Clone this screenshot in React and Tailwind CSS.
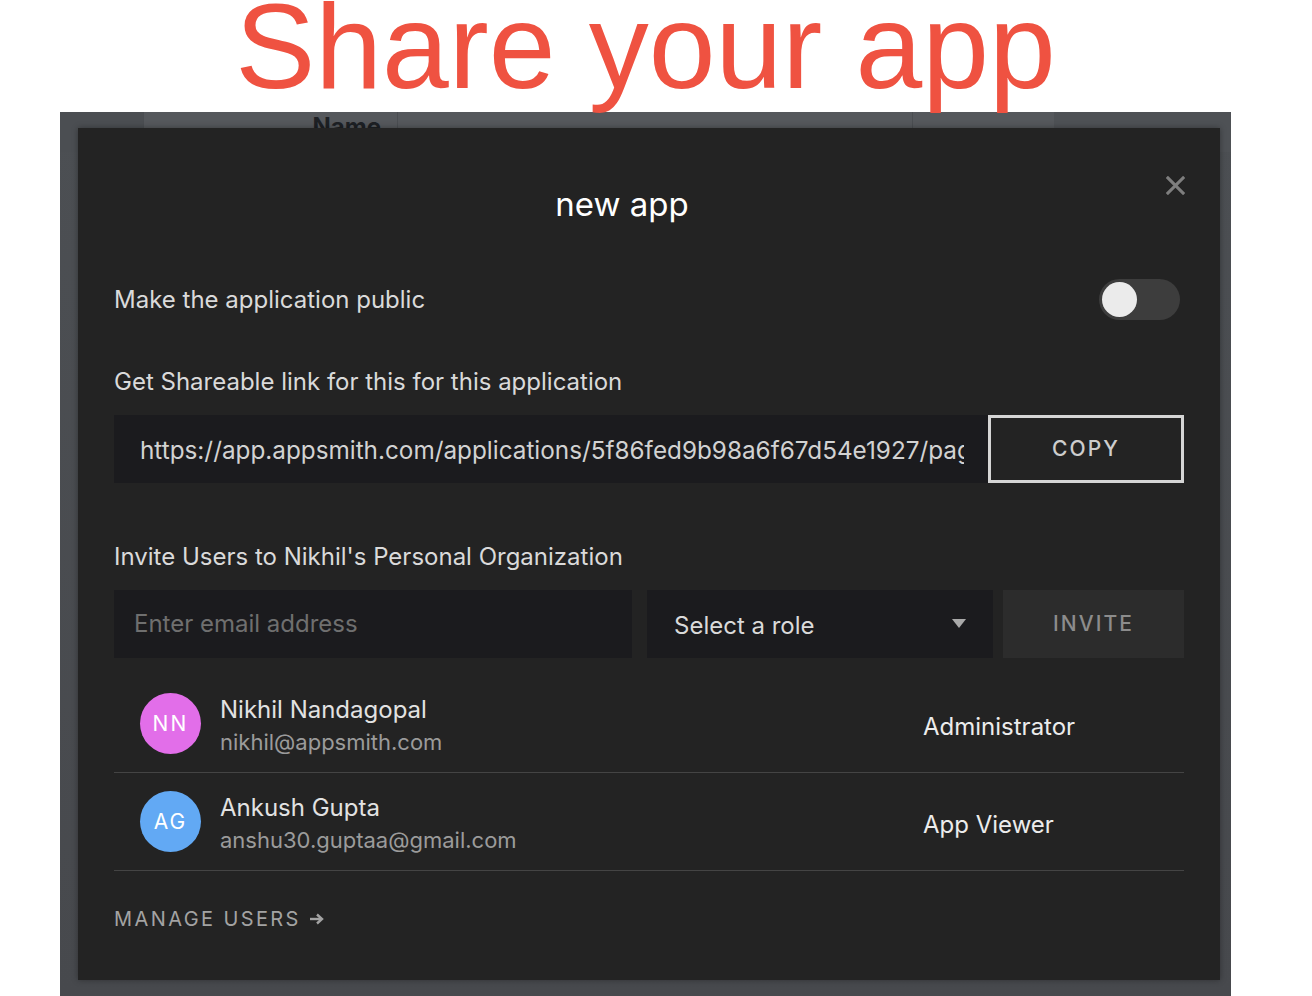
import React, { useState } from 'react';

const users = [
  { initials: 'NN', name: 'Nikhil Nandagopal', email: 'nikhil@appsmith.com', role: 'Administrator', color: 'bg-[#e26ee9]' },
  { initials: 'AG', name: 'Ankush Gupta', email: 'anshu30.guptaa@gmail.com', role: 'App Viewer', color: 'bg-[#62a9f4]' },
];

const shareLink = 'https://app.appsmith.com/applications/5f86fed9b98a6f67d54e1927/pages/5f86fed9b98a6f67d54e1929';

const CloseIcon = () => (
  <svg width="19" height="19" viewBox="0 0 20 20" fill="none">
    <path d="M2 2L18 18M18 2L2 18" stroke="#7e7e7e" strokeWidth="3.2" strokeLinecap="square" />
  </svg>
);

const Caret = () => (
  <svg width="14" height="10" viewBox="0 0 14 10">
    <path d="M0 0H14L7 9Z" fill="#a9a9a9" />
  </svg>
);

const ArrowRight = () => (
  <svg width="15" height="12" viewBox="0 0 15 12" fill="none">
    <path d="M1 6H12" stroke="#a3a3a3" strokeWidth="2.4" />
    <path d="M8 1.5L13 6L8 10.5" stroke="#a3a3a3" strokeWidth="2.4" fill="none" />
  </svg>
);

const ShareModal = () => {
  const [isPublic, setIsPublic] = useState(false);

  return (
    <div className="absolute left-[18px] top-[16px] w-[1142px] h-[852px] bg-[#232323] shadow-[0_0_6px_rgba(0,0,0,0.35)] px-[36px] flex flex-col font-['Inter',sans-serif]">
      <button className="absolute top-[48px] right-[35px]">
        <CloseIcon />
      </button>

      <h2 className="pt-[56px] pr-[54px] text-center text-[33px] leading-[40px] text-white font-normal">new app</h2>

      <div className="mt-[55px] h-[41px] flex items-center justify-between">
        <span className="text-[24px] leading-[28px] text-[#dadada]">Make the application public</span>
        <button
          onClick={() => setIsPublic(!isPublic)}
          className="w-[81px] h-[41px] rounded-full bg-[#3d3d3d] flex items-center px-[3px] mr-[4px]"
        >
          <span className="w-[35px] h-[35px] rounded-full bg-[#ebebeb]" />
        </button>
      </div>

      <p className="mt-[48px] text-[24px] leading-[28px] text-[#dadada]">Get Shareable link for this for this application</p>

      <div className="mt-[19px] flex h-[68px]">
        <div className="w-[874px] bg-[#1b1b1e] flex items-center pl-[26px] pr-[24px] pt-[3px]">
          <span className="block min-w-0 flex-1 text-[24.3px] text-[#d2d2d2] whitespace-nowrap overflow-hidden">{shareLink}</span>
        </div>
        <button className="w-[196px] h-[68px] border-[3px] border-[#d5d5d5] text-[21px] tracking-[0.1em] text-[#cdcdcd] font-medium">
          COPY
        </button>
      </div>

      <p className="mt-[60px] text-[24px] leading-[28px] text-[#dadada]">Invite Users to Nikhil's Personal Organization</p>

      <div className="mt-[19px] flex h-[68px]">
        <div className="w-[518px] bg-[#1b1b1e] flex items-center pl-[20px]">
          <span className="text-[24px] text-[#6f6f6f]">Enter email address</span>
        </div>
        <div className="ml-[15px] w-[346px] bg-[#1b1b1e] flex items-center justify-between pl-[27px] pr-[27px]">
          <span className="mt-[3px] text-[24px] text-[#dadada]">Select a role</span>
          <Caret />
        </div>
        <button className="ml-[10px] flex-1 bg-[#2c2c2c] text-[21px] tracking-[0.1em] text-[#8c8c8c] font-medium">
          INVITE
        </button>
      </div>

      <div className="mt-[17px]">
        {users.map((user) => (
          <div key={user.email} className="h-[98px] border-b border-[#444444] flex items-center pl-[26px]">
            <div className={`w-[61px] h-[61px] rounded-full ${user.color} flex items-center justify-center text-white text-[21px] tracking-[0.1em]`}>
              {user.initials}
            </div>
            <div className="ml-[19px] mt-[4px] w-[703px] flex flex-col">
              <span className="text-[24px] leading-[33px] text-[#e2e2e2]">{user.name}</span>
              <span className="text-[22px] leading-[33px] text-[#9b9b9b]">{user.email}</span>
            </div>
            <span className="mt-[6px] text-[24px] text-[#ececec]">{user.role}</span>
          </div>
        ))}
      </div>

      <a href="#" className="mt-[36px] flex items-center gap-[8px] text-[20px] leading-[24px] tracking-[0.12em] text-[#a3a3a3]">
        MANAGE USERS
        <ArrowRight />
      </a>
    </div>
  );
};

const App = () => {
  return (
    <div className="w-[1312px] h-[996px] bg-white overflow-hidden">
      <div className="ml-[60px] w-[1171px]">
        <div className="relative z-10 h-[112px] flex justify-center">
          <h1 className="-mt-[14px] h-[120px] text-center text-[120px] leading-[120px] text-[#ef5241] font-['Liberation_Sans',Arial,sans-serif] whitespace-nowrap">
            Share your app
          </h1>
        </div>

        <div className="relative h-[884px] bg-[linear-gradient(180deg,#4c4f53,#47494d)]">
          <div className="flex h-[40px] font-['Inter',sans-serif]">
            <div className="w-[83px] bg-[#4b4e52]" />
            <div className="w-[254px] bg-[#55585c] border-l border-[#4a4d51] flex justify-end pr-[16px]">
              <span className="text-[24px] font-bold text-[#1d2024] leading-[28px] mt-[1px]">Name</span>
            </div>
            <div className="w-[515px] bg-[#55585c] border-l border-[#4a4d51]" />
            <div className="w-[142px] bg-[#55585c] border-l border-[#4a4d51]" />
            <div className="flex-1 bg-[#4e5155]" />
          </div>
          <ShareModal />
        </div>
      </div>
    </div>
  );
};

export default App;
